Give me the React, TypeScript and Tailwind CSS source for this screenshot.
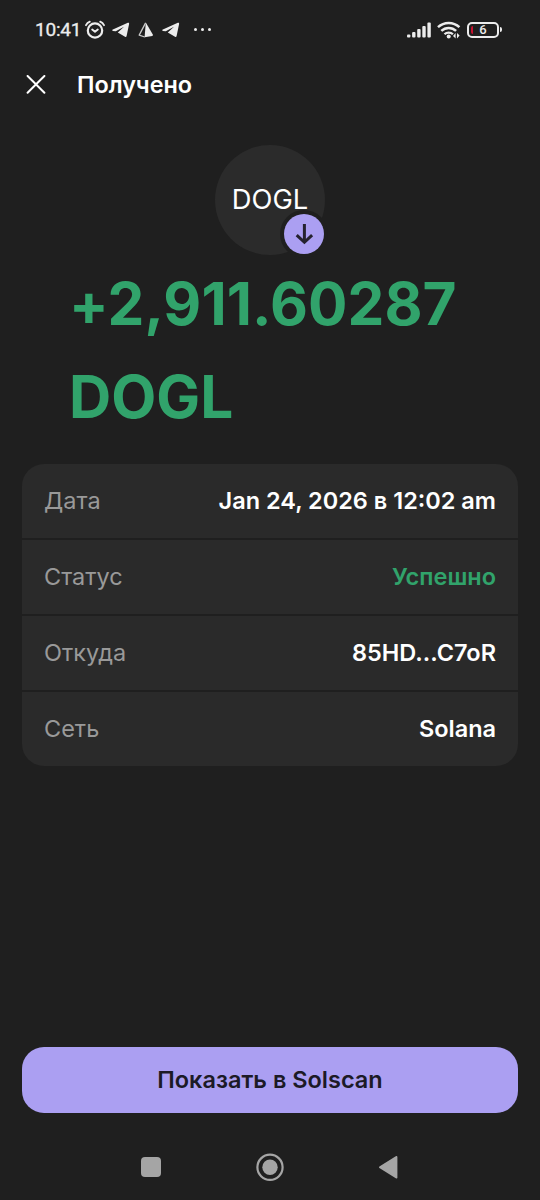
import React from 'react';

interface DetailRow {
  label: string;
  value: string;
  valueClass: string;
}

const rows: DetailRow[] = [
  { label: 'Дата', value: 'Jan 24, 2026 в 12:02 am', valueClass: 'text-white' },
  { label: 'Статус', value: 'Успешно', valueClass: 'text-[#31a36b]' },
  { label: 'Откуда', value: '85HD...C7oR', valueClass: 'text-white' },
  { label: 'Сеть', value: 'Solana', valueClass: 'text-white' },
];

function AlarmIcon() {
  return (
    <svg width="20" height="20" viewBox="0 0 20 20" fill="none" stroke="#ececec" strokeLinecap="round">
      <circle cx="10" cy="10.5" r="7.2" strokeWidth="2.2" />
      <path d="M1 5.2 Q2.2 2.8 4.8 1.7M19 5.2Q17.8 2.8 15.2 1.7" strokeWidth="1.8" />
      <path d="m7.2 9.6 2.8 2.2 2.8-2.2" strokeWidth="1.9" strokeLinejoin="round" />
    </svg>
  );
}

function TelegramIcon() {
  return (
    <svg width="18" height="16" viewBox="0 0 18 16" fill="#ececec">
      <path d="M.9 7.6 15.8.8c.9-.4 1.5.1 1.3 1.1l-2.5 12.2c-.2.9-.8 1.1-1.6.7l-7.2-4.3 6.2-5.8-8.2 4.6L.9 8.9c-.9-.3-.9-.8 0-1.3Z" />
    </svg>
  );
}

function PrismIcon() {
  return (
    <svg width="16" height="16" viewBox="0 0 16 16">
      <path d="M7.8.5 14.8 12.6c.3.6.1 1-.5 1.3L6.6 15.3Z" fill="#ececec" />
      <path d="M7.6.9 1.2 13.1l5.6 1.9" fill="none" stroke="#c9c9c9" strokeWidth="1.3" strokeLinejoin="round" />
    </svg>
  );
}

function SignalIcon() {
  return (
    <svg width="24" height="16" viewBox="0 0 24 16" fill="#ececec">
      <rect x="0" y="12.4" width="3.4" height="3" rx="1" />
      <rect x="5.1" y="10" width="3.4" height="5.4" rx="1" />
      <rect x="10.2" y="7" width="3.4" height="8.4" rx="1" />
      <rect x="15.3" y="4" width="3.4" height="11.4" rx="1" />
      <rect x="20.4" y=".4" width="3.4" height="15" rx="1" />
    </svg>
  );
}

function WifiIcon() {
  return (
    <svg width="24" height="18" viewBox="0 0 24 18" fill="none" stroke="#ececec">
      <path d="M1 6.2a15.6 15.6 0 0 1 21.4 0" strokeWidth="2.5" />
      <path d="M4.3 9.9a10.6 10.6 0 0 1 14.8 0" strokeWidth="2.5" />
      <path d="M7.5 13.3a6 6 0 0 1 8.4 0" strokeWidth="2.3" />
      <circle cx="11.7" cy="15.5" r="2" fill="#ececec" stroke="none" />
      <path d="M18.6 12v5.6l-2.6-2.6ZM20 17.6V12l2.6 2.6Z" fill="#ececec" stroke="none" />
    </svg>
  );
}

function StatusBar() {
  return (
    <div className="flex h-[58px] shrink-0 items-center pl-[35px] pr-[38px] pt-px">
      <span className="w-[50px] font-[Roboto] text-[19px] leading-none tracking-[-0.2px] text-[#ececec] [-webkit-text-stroke:0.3px_#ececec]">
        10:41
      </span>
      <AlarmIcon />
      <div className="ml-[7px] flex items-center gap-[8px]">
        <TelegramIcon />
        <PrismIcon />
        <TelegramIcon />
      </div>
      <div className="ml-[14px] flex gap-[4px]">
        <span className="size-[3px] rounded-full bg-[#ececec]" />
        <span className="size-[3px] rounded-full bg-[#ececec]" />
        <span className="size-[3px] rounded-full bg-[#ececec]" />
      </div>
      <div className="ml-auto flex items-center">
        <SignalIcon />
        <div className="ml-[6px]">
          <WifiIcon />
        </div>
        <div className="relative ml-[6px] flex h-[16px] w-[32px] items-center justify-center rounded-[5px] border-2 border-[#ececec]">
          <span className="absolute left-[2px] top-[2px] h-[8px] w-[2px] rounded-l-sm bg-[#c8102e]" />
          <span className="font-[Roboto] text-[13px] font-medium leading-none text-[#ececec]">6</span>
        </div>
        <span className="ml-px h-[5px] w-[2px] rounded-r-sm bg-[#ececec]" />
      </div>
    </div>
  );
}

function Header() {
  return (
    <header className="flex h-[54px] shrink-0 items-center pl-[26px]">
      <svg width="20" height="20" viewBox="0 0 20 20" fill="none" stroke="#fff" strokeWidth="2" strokeLinecap="round">
        <path d="m1.6 1 16.8 16.8M18.4 1 1.6 17.8" />
      </svg>
      <h1 className="ml-[31px] text-[23.4px] font-semibold leading-none text-white">Получено</h1>
    </header>
  );
}

function TokenAvatar() {
  return (
    <div className="relative mx-auto mt-[32.5px] flex size-[110px] shrink-0 items-center justify-center rounded-full bg-[#2b2b2b]">
      <span className="mt-px text-[27.3px] leading-none text-white">DOGL</span>
      <div className="absolute -bottom-[3px] -right-[3px] flex size-[48px] items-center justify-center rounded-full bg-[#1f1f1f]">
        <div className="flex size-[40px] items-center justify-center rounded-full bg-[#ab9ff2]">
          <svg width="20" height="22" viewBox="0 0 20 22" fill="none" stroke="#25222f" strokeWidth="3">
            <path d="M10.4 1v18M2.7 12.2l7.7 7.1 7.7-7.1" />
          </svg>
        </div>
      </div>
    </div>
  );
}

export default function App() {
  return (
    <div className="flex h-[1200px] w-[540px] flex-col overflow-hidden bg-[#1f1f1f] font-[Inter,sans-serif]">
      <StatusBar />
      <Header />
      <TokenAvatar />

      <div className="mt-[2px] pl-[69px] text-[58.5px] font-bold leading-[93px] text-[#31a36b]">
        <div className="tracking-[0.08px]">+2,911.60287</div>
        <div>DOGL</div>
      </div>

      <div className="mx-[22px] mt-[21px] flex flex-col gap-[2px] overflow-hidden rounded-[22px]">
        {rows.map((row) => (
          <div key={row.label} className="flex h-[74px] items-center justify-between bg-[#2a2a2a] px-[22px]">
            <span className="text-[23.5px] leading-none text-[#999999]">{row.label}</span>
            <span className={`text-[23.5px] font-semibold leading-none ${row.valueClass}`}>{row.value}</span>
          </div>
        ))}
      </div>

      <button className="mx-[22px] mt-auto h-[66px] shrink-0 rounded-[22px] bg-[#ab9ff2] text-[23.5px] font-semibold leading-none text-[#1c1a26]">
        Показать в Solscan
      </button>

      {/* Android navigation */}
      <nav className="mt-[26px] flex h-[61px] shrink-0 items-start justify-between pl-[141px] pr-[142px] pt-[14px]">
        <div className="mt-[4px] size-[20px] rounded-[4px] bg-[#a5a5a5]" />
        <svg width="28" height="28" viewBox="0 0 28 28">
          <circle cx="14" cy="14.3" r="12.6" fill="none" stroke="#a5a5a5" strokeWidth="2.2" />
          <circle cx="14" cy="14.3" r="7.7" fill="#a5a5a5" />
        </svg>
        <svg className="mt-[2px]" width="20" height="24" viewBox="0 0 20 24">
          <path d="M1.8 12.3 18.6 1.8v21Z" fill="#a5a5a5" stroke="#a5a5a5" strokeWidth="1.6" strokeLinejoin="round" />
        </svg>
      </nav>
    </div>
  );
}
